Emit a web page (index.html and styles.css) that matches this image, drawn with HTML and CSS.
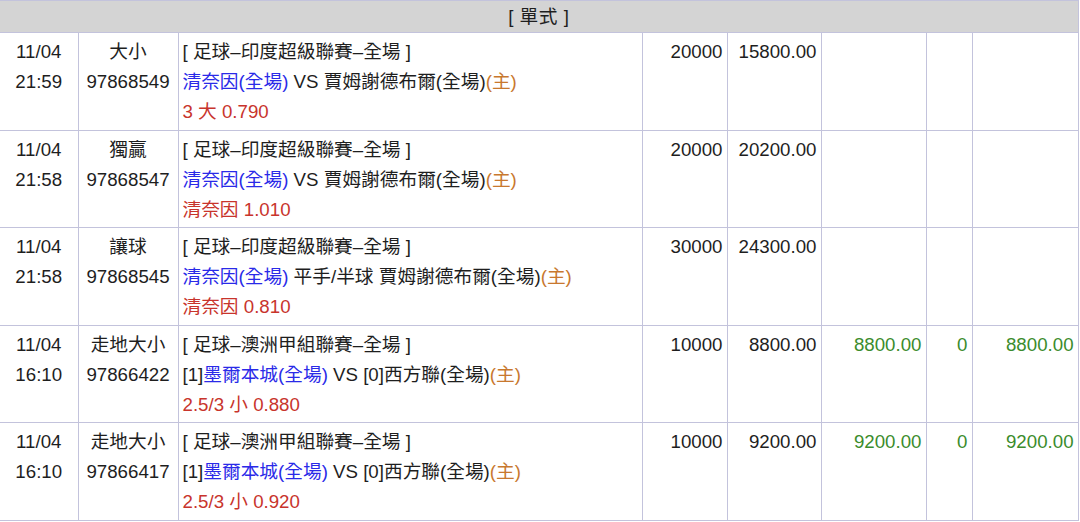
FILE: index.html
```html
<!DOCTYPE html>
<html lang="zh-Hant">
<head>
<meta charset="utf-8">
<link rel="stylesheet" href="styles.css">
</head>
<body>
<table class="bets">
  <colgroup>
    <col class="c-date"><col class="c-type"><col class="c-detail"><col class="c-stake"><col class="c-win"><col class="c-res"><col class="c-fee"><col class="c-net">
  </colgroup>
  <thead>
    <tr><th colspan="8" class="title">[ 單式 ]</th></tr>
  </thead>
  <tbody>
    <tr>
      <td class="ctr">11/04<br>21:59</td>
      <td class="ctr">大小<br>97868549</td>
      <td class="detail">[ 足球–印度超級聯賽–全場 ]<br><span class="blue">清奈因(全場)</span> VS 賈姆謝德布爾(全場)<span class="orange">(主)</span><br><span class="red">3 大 0.790</span></td>
      <td class="num">20000</td>
      <td class="num">15800.00</td>
      <td class="num"></td>
      <td class="num"></td>
      <td class="num"></td>
    </tr>
    <tr>
      <td class="ctr">11/04<br>21:58</td>
      <td class="ctr">獨贏<br>97868547</td>
      <td class="detail">[ 足球–印度超級聯賽–全場 ]<br><span class="blue">清奈因(全場)</span> VS 賈姆謝德布爾(全場)<span class="orange">(主)</span><br><span class="red">清奈因 1.010</span></td>
      <td class="num">20000</td>
      <td class="num">20200.00</td>
      <td class="num"></td>
      <td class="num"></td>
      <td class="num"></td>
    </tr>
    <tr>
      <td class="ctr">11/04<br>21:58</td>
      <td class="ctr">讓球<br>97868545</td>
      <td class="detail">[ 足球–印度超級聯賽–全場 ]<br><span class="blue">清奈因(全場)</span> 平手/半球 賈姆謝德布爾(全場)<span class="orange">(主)</span><br><span class="red">清奈因 0.810</span></td>
      <td class="num">30000</td>
      <td class="num">24300.00</td>
      <td class="num"></td>
      <td class="num"></td>
      <td class="num"></td>
    </tr>
    <tr>
      <td class="ctr">11/04<br>16:10</td>
      <td class="ctr">走地大小<br>97866422</td>
      <td class="detail">[ 足球–澳洲甲組聯賽–全場 ]<br>[1]<span class="blue">墨爾本城(全場)</span> VS [0]西方聯(全場)<span class="orange">(主)</span><br><span class="red">2.5/3 小 0.880</span></td>
      <td class="num">10000</td>
      <td class="num">8800.00</td>
      <td class="num green">8800.00</td>
      <td class="num green">0</td>
      <td class="num green">8800.00</td>
    </tr>
    <tr>
      <td class="ctr">11/04<br>16:10</td>
      <td class="ctr">走地大小<br>97866417</td>
      <td class="detail">[ 足球–澳洲甲組聯賽–全場 ]<br>[1]<span class="blue">墨爾本城(全場)</span> VS [0]西方聯(全場)<span class="orange">(主)</span><br><span class="red">2.5/3 小 0.920</span></td>
      <td class="num">10000</td>
      <td class="num">9200.00</td>
      <td class="num green">9200.00</td>
      <td class="num green">0</td>
      <td class="num green">9200.00</td>
    </tr>
  </tbody>
</table>
</body>
</html>
```

FILE: styles.css
```css
html, body {
  margin: 0;
  padding: 0;
  background: #ffffff;
}

body {
  font-family: "Liberation Sans", "Noto Sans CJK TC", sans-serif;
  font-size: 18.7px;
  color: #1e1e1e;
}

.bets {
  width: 1078px;
  border-collapse: collapse;
  table-layout: fixed;
}

.c-date { width: 78px; }
.c-type { width: 100px; }
.c-detail { width: 464px; }
.c-stake { width: 85px; }
.c-win { width: 94px; }
.c-res { width: 105px; }
.c-fee { width: 46px; }
.c-net { width: 106px; }

.bets th,
.bets td {
  border: 1px solid #c3c3dc;
  vertical-align: top;
  line-height: 30px;
  padding: 4px 4px 2.6px;
  white-space: nowrap;
  overflow: hidden;
}

.bets tr > :first-child {
  border-left: none;
}

.bets .title {
  background: #d4d4d4;
  font-weight: normal;
  text-align: center;
  height: 31px;
  padding: 0;
  line-height: 30px;
  vertical-align: middle;
  letter-spacing: 0.5px;
}

.ctr {
  text-align: center;
}

.detail {
  text-align: left;
}

.num {
  text-align: right;
}

.blue { color: #2a2ae8; }
.red { color: #c8342c; }
.orange { color: #c8782e; }
.green { color: #3b8c2c; }
```
